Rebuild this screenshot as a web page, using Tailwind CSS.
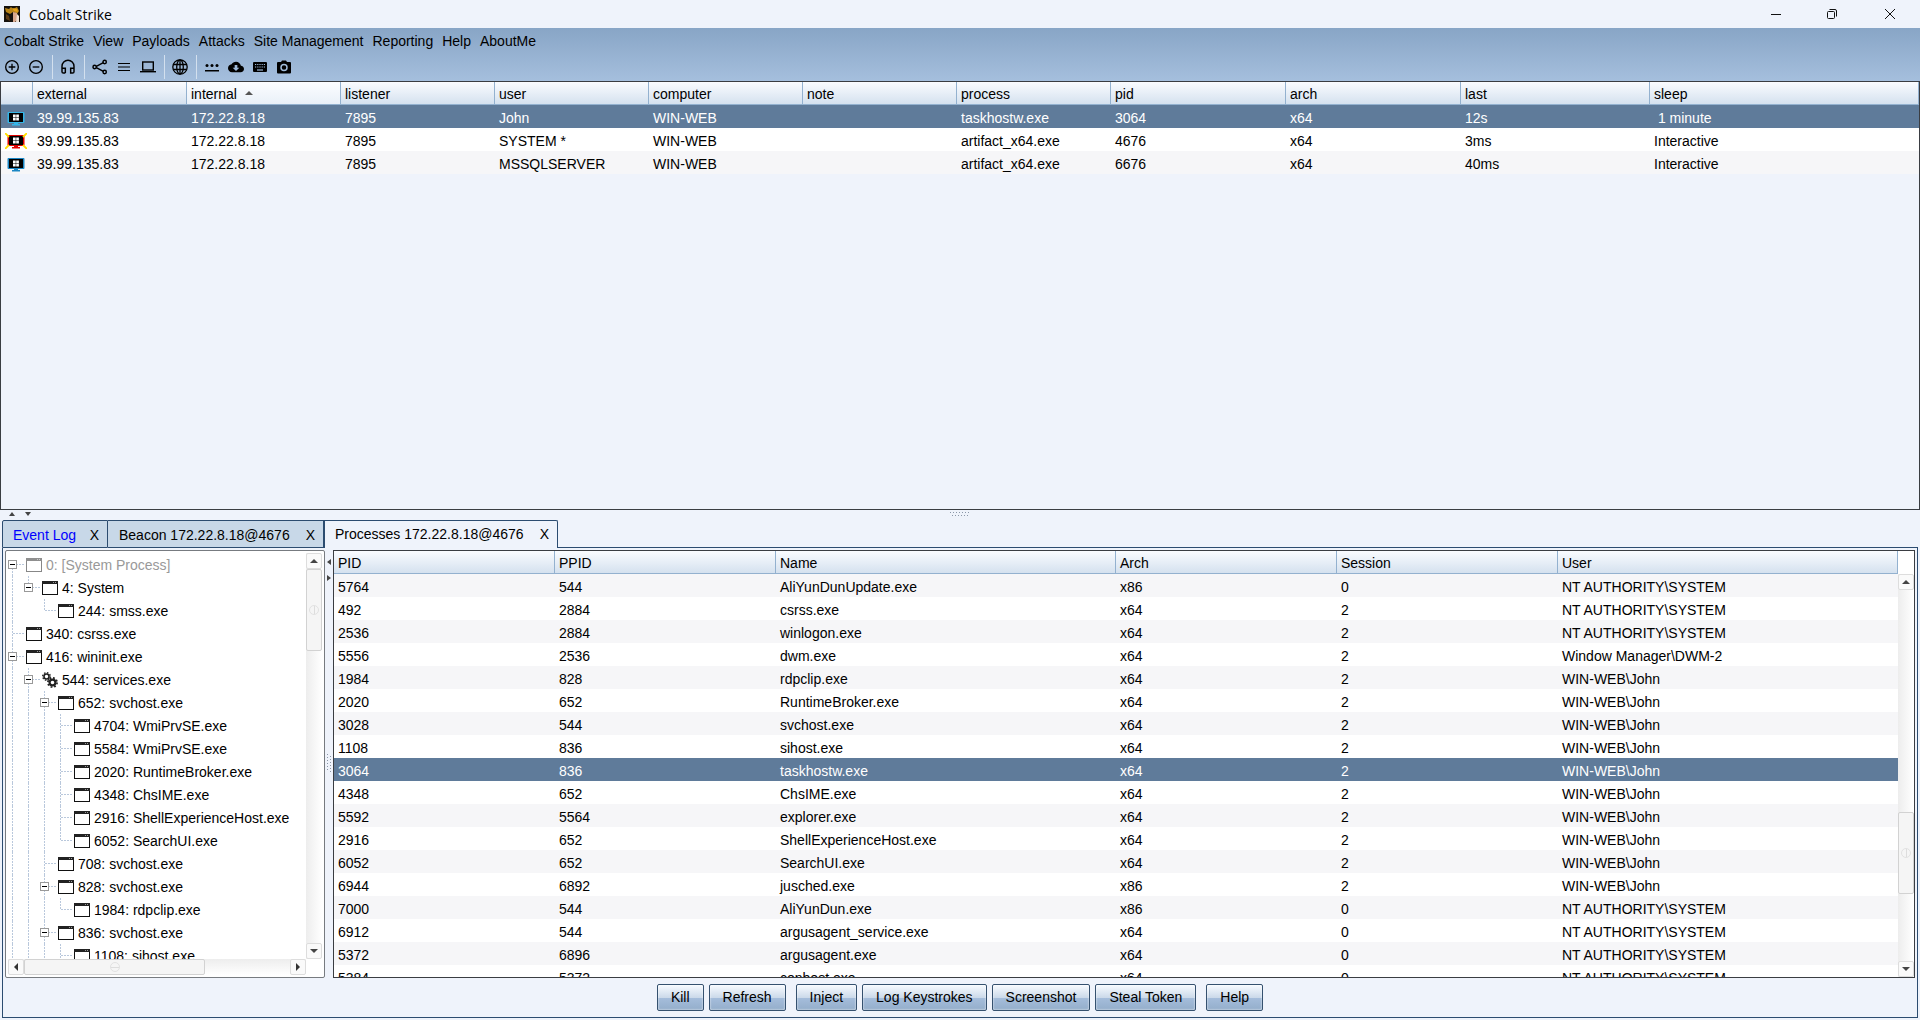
<!DOCTYPE html>
<html lang="en">
<head>
    <meta charset="UTF-8">
    <meta name="viewport" content="width=device-width, initial-scale=1.0">
    <title>Cobalt Strike</title>
    <script src="https://cdn.jsdelivr.net/npm/@tailwindcss/browser@4"></script>
</head>
<body class="h-screen overflow-hidden flex flex-col bg-[#eff3fb] text-black text-sm font-['Liberation_Sans',Arial,sans-serif] cursor-default">

    <!-- Shared icons -->
    <svg class="hidden">
        <symbol id="i-window" viewBox="0 0 16 16">
            <rect x="0.5" y="1.5" width="15" height="13" fill="#fff" stroke="#111"/>
            <path d="M0 1h16v3H0z" fill="#222"/>
            <path d="M11 2h1v1h-1zM13 2h1v1h-1z" fill="#999"/>
        </symbol>
        <symbol id="i-gears" viewBox="0 0 16 16">
            <circle cx="4.500" cy="4.500" r="2.500" fill="none" stroke="#222" stroke-width="1.600"/>
            <circle cx="4.500" cy="4.500" r="3.800" fill="none" stroke="#222" stroke-width="1.400" stroke-dasharray="1.500 1.480"/>
            <circle cx="10.500" cy="10.500" r="2.900" fill="none" stroke="#222" stroke-width="2.200"/>
            <circle cx="10.500" cy="10.500" r="4.600" fill="none" stroke="#222" stroke-width="1.700" stroke-dasharray="1.800 1.810"/>
        </symbol>
        <symbol id="i-host" viewBox="0 0 22 16">
            <rect x="2.500" y="2" width="17" height="11" rx="1" fill="currentColor"/>
            <rect x="4" y="3" width="14" height="9" fill="#000"/>
            <path d="M9 13h4v1h2v1.500H7V14h2z" fill="currentColor"/>
            <path d="M8 4.500h2.700v2.700H8zM11.200 4.500h2.700v2.700h-2.700zM8 7.700h2.700v2.700H8zM11.200 7.700h2.700v2.700h-2.700z" fill="#fff"/>
        </symbol>
    </svg>

    <!-- Title bar -->
    <header class="h-7 shrink-0 flex items-center bg-[#eff3fb]">
        <svg class="size-4 ml-1" viewBox="0 0 16 16">
            <path fill="#15110d" d="M0 0h16v16H0z"/>
            <path fill="#b98418" d="M1 2l4 1 2-2 2 2 4-2 2 4-2 3-4-2-3 2-4-2z"/>
            <path fill="#e8a317" d="M8 2l5 1 1 3-4-1z"/>
            <path fill="#d9a78c" d="M9 6l4 1v7l-2 2H9z"/>
            <path fill="#f3e2d5" d="M13 8l2 2v6h-3z"/>
            <path fill="#5d3b16" d="M2 8l3 2 1 5-4-2z"/>
        </svg>
        <h1 class="ml-[9px] pt-px flex-1 font-['Open_Sans',sans-serif]">Cobalt Strike</h1>
        <button class="w-14 h-7 flex items-center justify-center" aria-label="Minimize"><svg class="w-[10px] h-[10px]" viewBox="0 0 10 10"><path d="M0 5.500h10" stroke="#111"/></svg></button>
        <button class="w-14 h-7 flex items-center justify-center" aria-label="Restore"><svg class="w-[10px] h-[10px]" viewBox="0 0 10 10" fill="none" stroke="#111"><rect x="0.500" y="2.500" width="7" height="7" rx="1"/><path d="M2.500 .5h5.500a1.500 1.500 0 0 1 1.500 1.500v5.500"/></svg></button>
        <button class="w-[60px] h-7 flex items-center justify-center" aria-label="Close"><svg class="w-[10px] h-[10px]" viewBox="0 0 10 10"><path d="M0 0l10 10M10 0L0 10" stroke="#111"/></svg></button>
    </header>

    <!-- Menu and toolbar -->
    <div class="h-[53px] shrink-0 bg-[linear-gradient(to_bottom,#88a5c6,#a5bfdd)]">
        <nav class="flex gap-[9px] pl-1 h-[26px] items-center">
            <button>Cobalt Strike</button>
            <button>View</button>
            <button>Payloads</button>
            <button>Attacks</button>
            <button>Site Management</button>
            <button>Reporting</button>
            <button>Help</button>
            <button>AboutMe</button>
        </nav>
        <div class="flex items-center gap-2 pl-1 h-[26px]">
            <button aria-label="Connect"><svg class="size-4" viewBox="0 0 24 24" fill="none" stroke="#000" stroke-width="2"><circle cx="12" cy="12" r="9.500"/><path d="M12 7v10M7 12h10"/></svg></button>
            <button aria-label="Disconnect"><svg class="size-4" viewBox="0 0 24 24" fill="none" stroke="#000" stroke-width="2"><circle cx="12" cy="12" r="9.500"/><path d="M7 12h10"/></svg></button>
            <span class="w-px -mr-px h-6 bg-[#d3e0ee]"></span>
            <button aria-label="Listeners"><svg class="size-4" viewBox="0 0 24 24" fill="none" stroke="#000" stroke-width="2.200"><path d="M8 21H5a2 2 0 0 1-2-2v-8a9 9 0 0 1 18 0v8a2 2 0 0 1-2 2h-3v-7h5M3 14h5v7"/></svg></button>
            <span class="w-px -mr-px h-6 bg-[#d3e0ee]"></span>
            <button aria-label="Pivot graph"><svg class="size-4" viewBox="0 0 24 24" fill="none" stroke="#000" stroke-width="2.200"><circle cx="19" cy="4.500" r="2.500"/><circle cx="4" cy="12" r="2.500"/><circle cx="19" cy="19.500" r="2.500"/><path d="M6.500 11L17 5.500M6.500 13L17 18.500"/></svg></button>
            <button aria-label="Session table"><svg class="size-4" viewBox="0 0 16 16" stroke="#000"><path d="M2 4.500h12M2 8h12M2 11.500h12" stroke-width="1.200"/></svg></button>
            <button aria-label="Target table"><svg class="size-4" viewBox="0 0 16 16" fill="none" stroke="#000" stroke-width="1.400"><rect x="2.700" y="3" width="10.600" height="8"/><path d="M0 12.700h16"/></svg></button>
            <span class="w-px -mr-px h-6 bg-[#d3e0ee]"></span>
            <button aria-label="Web drive-by"><svg class="size-4" viewBox="0 0 16 16" fill="none" stroke="#000" stroke-width="1.300"><circle cx="8" cy="8" r="7.200"/><ellipse cx="8" cy="8" rx="3.300" ry="7.200"/><path d="M1.500 5.500h13M1.500 10.500h13M8 1v14"/></svg></button>
            <span class="w-px -mr-px h-6 bg-[#d3e0ee]"></span>
            <button aria-label="Credentials"><svg class="size-4" viewBox="0 0 16 16" fill="#000"><path d="M1 11h14v1.500H1z"/><circle cx="3" cy="6.500" r="1.500"/><circle cx="8" cy="6.500" r="1.500"/><circle cx="13" cy="6.500" r="1.500"/></svg></button>
            <button aria-label="Downloads"><svg class="size-4" viewBox="0 0 24 24"><path d="M19.350 10.040C18.670 6.590 15.640 4 12 4 9.110 4 6.600 5.640 5.350 8.040 2.340 8.360 0 10.910 0 14c0 3.310 2.690 6 6 6h13c2.760 0 5-2.240 5-5 0-2.640-2.050-4.780-4.650-4.960zM17 13l-5 5-5-5h3V9h4v4h3z"/></svg></button>
            <button aria-label="Keystrokes"><svg class="size-4" viewBox="0 0 16 16"><rect x="1" y="3" width="14" height="10" rx="1"/><path d="M3 5.500h10M3 8h10" stroke="#a0bbd9" stroke-width="1.200" stroke-dasharray="1.200 1"/><path d="M5 11h6" stroke="#a0bbd9" stroke-width="1.200"/></svg></button>
            <button aria-label="Screenshots"><svg class="size-4" viewBox="0 0 16 16"><path d="M2 3h3l1-1.500h4L11 3h3a1 1 0 0 1 1 1v9.500a1 1 0 0 1-1 1H2a1 1 0 0 1-1-1V4a1 1 0 0 1 1-1z"/><circle cx="8" cy="8.500" r="3" fill="none" stroke="#a0bbd9" stroke-width="1.500"/></svg></button>
        </div>
    </div>

    <!-- Sessions -->
    <section class="h-[429px] shrink-0 border border-[#3a3d42]">
        <table class="w-full table-fixed border-separate border-spacing-0 text-left whitespace-nowrap">
            <colgroup>
                <col class="w-[32px]"><col class="w-[154px]"><col class="w-[154px]"><col class="w-[154px]"><col class="w-[154px]"><col class="w-[154px]"><col class="w-[154px]"><col class="w-[154px]"><col class="w-[175px]"><col class="w-[175px]"><col class="w-[189px]"><col>
            </colgroup>
            <thead class="bg-[linear-gradient(to_bottom,#fafcff,#d3e0ee)]">
                <tr class="h-[23px] *:border-r *:border-b *:border-[#93b1cf] *:px-1 *:pt-[2px] *:pb-0 *:font-normal *:leading-[20px]">
                    <th></th><th>external</th>
                    <th class="bg-[linear-gradient(to_bottom,#fcfdff,#e9f0f8)]">internal <svg class="inline w-2 h-1 ml-1 mb-1" viewBox="0 0 8 4"><path d="M0 4l4-4 4 4z" fill="#555"/></svg></th>
                    <th>listener</th><th>user</th><th>computer</th><th>note</th><th>process</th><th>pid</th><th>arch</th><th>last</th><th>sleep</th>
                </tr>
            </thead>
            <tbody id="sessions"></tbody>
        </table>
    </section>

    <!-- Horizontal splitter -->
    <div class="h-[10px] shrink-0 flex items-center relative pb-[2px]">
        <svg class="w-7 h-1 ml-2" viewBox="0 0 28 4"><path d="M1 4l3-4 3 4zM17 0l3 4 3-4z" fill="#444"/></svg>
        <svg class="absolute left-1/2 -translate-x-1/2 w-5 h-1" viewBox="0 0 20 4"><path d="M0 .5h20M2 3.500h18" stroke="#8b97a8" stroke-dasharray="1 2"/></svg>
    </div>

    <!-- Tabs -->
    <div class="h-7 shrink-0 flex mx-[2px]">
        <div class="flex items-center pl-[10px] pr-2 pt-[2px] border border-[#2c4c70] rounded-tl-xs bg-[#c8d8e8] w-[106px] justify-between">
            <button class="text-[#0000ff]">Event Log</button><button aria-label="Close Event Log">X</button>
        </div>
        <div class="flex items-center pl-[11px] pr-2 pt-[2px] border border-l-0 border-[#2c4c70] bg-[#c8d8e8] w-[216px] justify-between">
            <button>Beacon 172.22.8.18@4676</button><button aria-label="Close Beacon">X</button>
        </div>
        <div class="flex items-center pl-[10px] pr-2 pb-[2px] border border-b-0 border-[#2c4c70] rounded-tr-xs w-[234px] justify-between">
            <button>Processes 172.22.8.18@4676</button><button aria-label="Close Processes">X</button>
        </div>
        <div class="flex-1 border-b border-[#2c4c70]"></div>
    </div>

    <!-- Process browser -->
    <main class="flex-1 min-h-0 flex flex-col mx-[2px] mb-[2px] border border-t-0 border-[#2c4c70] pt-[2px] px-[2px]">
        <div class="flex-1 min-h-0 flex">
            <!-- Process tree -->
            <div class="w-[320px] shrink-0 border border-[#777b80] rounded-xs bg-white p-[2px] flex flex-col">
                <div class="flex-1 min-h-0 flex">
                    <ul id="tree" class="flex-1 min-w-0 overflow-hidden whitespace-nowrap"></ul>
                    <div class="w-4 shrink-0 flex flex-col bg-[linear-gradient(to_right,#ededed,#fff)]">
                        <button class="h-4 shrink-0 flex items-center justify-center border border-[#ddd] rounded-xs bg-[#fafafa]" aria-label="Up"><svg class="w-2 h-1" viewBox="0 0 8 4"><path d="M0 4l4-4 4 4z" fill="#444"/></svg></button>
                        <div class="h-[82px] flex items-center justify-center border border-[#d2d2d2] rounded-xs bg-[#f5f5f5]"><span class="size-[10px] rounded-full border border-[#e2e2e2] flex justify-center"><span class="w-px bg-[#ddd]"></span></span></div>
                        <div class="flex-1"></div>
                        <button class="h-4 shrink-0 flex items-center justify-center border border-[#ddd] rounded-xs bg-[#fafafa]" aria-label="Down"><svg class="w-2 h-1" viewBox="0 0 8 4"><path d="M0 0l4 4 4-4z" fill="#444"/></svg></button>
                    </div>
                </div>
                <div class="h-4 shrink-0 flex mr-4 bg-[linear-gradient(to_bottom,#ededed,#fff)]">
                    <button class="w-4 flex items-center justify-center border border-[#ddd] rounded-xs bg-[#fafafa]" aria-label="Left"><svg class="w-1 h-2" viewBox="0 0 4 8"><path d="M4 0L0 4l4 4z" fill="#333"/></svg></button>
                    <div class="w-[181px] flex items-center justify-center border border-[#d2d2d2] rounded-xs bg-[#f5f5f5]"><span class="size-[10px] rounded-full border border-[#e2e2e2] flex flex-col justify-center"><span class="h-px bg-[#ddd]"></span></span></div>
                    <div class="flex-1"></div>
                    <button class="w-4 flex items-center justify-center border border-[#ddd] rounded-xs bg-[#fafafa]" aria-label="Right"><svg class="w-1 h-2" viewBox="0 0 4 8"><path d="M0 0l4 4-4 4z" fill="#333"/></svg></button>
                </div>
            </div>

            <!-- Vertical splitter -->
            <div class="w-2 shrink-0 flex flex-col items-center relative pt-[9px]">
                <svg class="w-1 h-6" viewBox="0 0 4 24"><path d="M4 0v6L0 3zM0 16v6l4-3z" fill="#444"/></svg>
                <svg class="absolute top-1/2 -translate-y-1/2 w-1 h-5" viewBox="0 0 4 20"><path d="M.5 0v18M3.500 2v18" stroke="#8b97a8" stroke-dasharray="1 2"/></svg>
            </div>

            <!-- Process table -->
            <div class="flex-1 min-w-0 flex border border-[#3a3d42] bg-white">
                <div class="flex-1 min-w-0 overflow-hidden">
                    <table class="w-full table-fixed border-separate border-spacing-0 text-left whitespace-nowrap">
                        <colgroup>
                            <col class="w-[221px]"><col class="w-[221px]"><col class="w-[340px]"><col class="w-[221px]"><col class="w-[221px]"><col>
                        </colgroup>
                        <thead class="bg-[linear-gradient(to_bottom,#fafcff,#d3e0ee)]">
                            <tr class="h-[23px] *:border-r *:border-b *:border-[#93b1cf] *:px-1 *:pt-[2px] *:pb-0 *:font-normal *:leading-[20px]">
                                <th>PID</th><th>PPID</th><th>Name</th><th>Arch</th><th>Session</th><th>User</th>
                            </tr>
                        </thead>
                        <tbody id="processes"></tbody>
                    </table>
                </div>
                <div class="w-4 shrink-0 mt-[23px] flex flex-col bg-[linear-gradient(to_right,#ededed,#fff)]">
                    <button class="h-4 shrink-0 flex items-center justify-center border border-[#ddd] rounded-xs bg-[#fafafa]" aria-label="Up"><svg class="w-2 h-1" viewBox="0 0 8 4"><path d="M0 4l4-4 4 4z" fill="#444"/></svg></button>
                    <div class="grow-[224]"></div>
                    <div class="h-[82px] shrink-0 flex items-center justify-center border border-[#d2d2d2] rounded-xs bg-[#f5f5f5]"><span class="size-[10px] rounded-full border border-[#e2e2e2] flex justify-center"><span class="w-px bg-[#ddd]"></span></span></div>
                    <div class="grow-[67]"></div>
                    <button class="h-4 shrink-0 flex items-center justify-center border border-[#ddd] rounded-xs bg-[#fafafa]" aria-label="Down"><svg class="w-2 h-1" viewBox="0 0 8 4"><path d="M0 0l4 4 4-4z" fill="#444"/></svg></button>
                </div>
            </div>
        </div>

        <!-- Actions -->
        <div id="actions" class="h-[39px] pb-px shrink-0 flex items-center justify-center gap-[5px]"></div>
    </main>

    <script>
        const sessions = [
            ['text-[#35b6e8]', '39.99.135.83', '172.22.8.18', '7895', 'John', 'WIN-WEB', '', 'taskhostw.exe', '3064', 'x64', '12s', '\u00a01 minute'],
            ['text-[#e00000]', '39.99.135.83', '172.22.8.18', '7895', 'SYSTEM *', 'WIN-WEB', '', 'artifact_x64.exe', '4676', 'x64', '3ms', 'Interactive'],
            ['text-[#1a86c4]', '39.99.135.83', '172.22.8.18', '7895', 'MSSQLSERVER', 'WIN-WEB', '', 'artifact_x64.exe', '6676', 'x64', '40ms', 'Interactive']
        ];

        const processes = [
            ['5764', '544', 'AliYunDunUpdate.exe', 'x86', '0', 'NT AUTHORITY\\SYSTEM'],
            ['492', '2884', 'csrss.exe', 'x64', '2', 'NT AUTHORITY\\SYSTEM'],
            ['2536', '2884', 'winlogon.exe', 'x64', '2', 'NT AUTHORITY\\SYSTEM'],
            ['5556', '2536', 'dwm.exe', 'x64', '2', 'Window Manager\\DWM-2'],
            ['1984', '828', 'rdpclip.exe', 'x64', '2', 'WIN-WEB\\John'],
            ['2020', '652', 'RuntimeBroker.exe', 'x64', '2', 'WIN-WEB\\John'],
            ['3028', '544', 'svchost.exe', 'x64', '2', 'WIN-WEB\\John'],
            ['1108', '836', 'sihost.exe', 'x64', '2', 'WIN-WEB\\John'],
            ['3064', '836', 'taskhostw.exe', 'x64', '2', 'WIN-WEB\\John'],
            ['4348', '652', 'ChsIME.exe', 'x64', '2', 'WIN-WEB\\John'],
            ['5592', '5564', 'explorer.exe', 'x64', '2', 'WIN-WEB\\John'],
            ['2916', '652', 'ShellExperienceHost.exe', 'x64', '2', 'WIN-WEB\\John'],
            ['6052', '652', 'SearchUI.exe', 'x64', '2', 'WIN-WEB\\John'],
            ['6944', '6892', 'jusched.exe', 'x86', '2', 'WIN-WEB\\John'],
            ['7000', '544', 'AliYunDun.exe', 'x86', '0', 'NT AUTHORITY\\SYSTEM'],
            ['6912', '544', 'argusagent_service.exe', 'x64', '0', 'NT AUTHORITY\\SYSTEM'],
            ['5372', '6896', 'argusagent.exe', 'x64', '0', 'NT AUTHORITY\\SYSTEM'],
            ['5384', '5372', 'conhost.exe', 'x64', '0', 'NT AUTHORITY\\SYSTEM']
        ];

        // prefix has one letter per level:
        // space = nothing, | = line through, t = branch, l = last branch, T / L = the same with an expander
        const tree = [
            ['F', '0: [System Process]'],
            ['|L', '4: System'],
            ['| l', '244: smss.exe'],
            ['t', '340: csrss.exe'],
            ['T', '416: wininit.exe'],
            ['|T', '544: services.exe'],
            ['||T', '652: svchost.exe'],
            ['|||t', '4704: WmiPrvSE.exe'],
            ['|||t', '5584: WmiPrvSE.exe'],
            ['|||t', '2020: RuntimeBroker.exe'],
            ['|||t', '4348: ChsIME.exe'],
            ['|||t', '2916: ShellExperienceHost.exe'],
            ['|||l', '6052: SearchUI.exe'],
            ['||t', '708: svchost.exe'],
            ['||T', '828: svchost.exe'],
            ['|||l', '1984: rdpclip.exe'],
            ['||T', '836: svchost.exe'],
            ['|||t', '1108: sihost.exe']
        ];

        const rowClass = (selected, gray) =>
            'h-[23px] *:px-1 *:pt-[3px] *:pb-0 *:leading-[20px] ' +
            (selected ? 'bg-[#5f7b9a] text-white' : gray ? 'bg-[#f6f6f8]' : 'bg-white');

        const rays = '<path d="M0 0l4 4M22 0l-4 4M0 16l4-4M22 16l-4-4" stroke="#ffe000" stroke-width="1.8"/>';

        document.getElementById('sessions').innerHTML = sessions.map(([color, ...cells], i) => `
            <tr class="${rowClass(i === 0, i === 2)}">
                <td><svg class="w-[22px] h-4 ${color}" viewBox="0 0 22 16"><use href="#i-host"/>${i === 1 ? rays : ''}</svg></td>
                ${cells.map(c => `<td>${c}</td>`).join('')}
            </tr>`).join('');

        document.getElementById('processes').innerHTML = processes.map((cells, i) => `
            <tr class="${rowClass(i === 8, i % 2 === 0)}">${cells.map(c => `<td>${c}</td>`).join('')}</tr>`).join('');

        const lines = {
            ' ': '',
            '|': 'M4.5 0v23',
            't': 'M4.5 0v23M5 11.5h11',
            'l': 'M4.5 0v12M5 11.5h11',
            'T': 'M4.5 0v23M5 11.5h11',
            'L': 'M4.5 0v12M5 11.5h11',
            'F': 'M4.5 12v11M5 11.5h11'
        };
        const expander = '<rect x=".5" y="7.500" width="8" height="8" fill="#fff" stroke="#999"/><path d="M2 11.500h5" stroke="#000"/>';

        document.getElementById('tree').innerHTML = tree.map(([prefix, name], i) => `
            <li class="flex items-center h-[23px] ${i === 0 ? 'text-[#999]' : ''}">
                ${[...prefix].map(p => `<svg class="w-4 h-[23px] shrink-0" viewBox="0 0 16 23"><path d="${lines[p]}" stroke="#b9c8dc" stroke-dasharray="2 1"/>${'TLF'.includes(p) ? expander : ''}</svg>`).join('')}
                <svg class="size-4 shrink-0 ml-[2px] mr-1 ${i === 0 ? 'opacity-50' : ''}"><use href="${name.includes('services') ? '#i-gears' : '#i-window'}"/></svg>
                <span>${name}</span>
            </li>`).join('');

        document.getElementById('actions').innerHTML = ['Kill', 'Refresh', 'Inject', 'Log Keystrokes', 'Screenshot', 'Steal Token', 'Help'].map(label => `
            <button class="h-[27px] px-[13px] border border-[#35516f] rounded-xs bg-[linear-gradient(to_bottom,#f8fbff,#ccdaea_50%,#a5bddb_52%,#94aecb)] shadow-[inset_0_0_2px_#fff] ${label === 'Refresh' || label === 'Steal Token' ? 'mr-[5px]' : ''}">${label}</button>`).join('');
    </script>
</body>
</html>
